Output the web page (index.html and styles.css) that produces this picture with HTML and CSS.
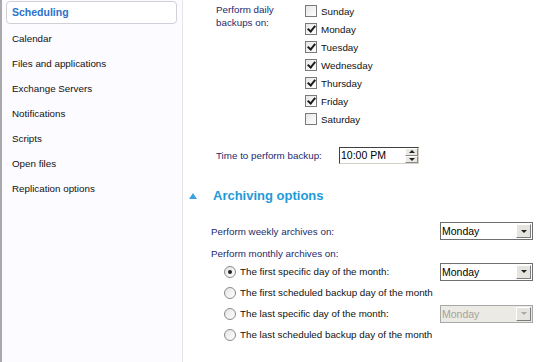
FILE: index.html
```html
<!DOCTYPE html>
<html lang="en">
<head>
    <meta charset="UTF-8">
    <title>Backup options</title>
    <link rel="stylesheet" href="styles.css">
</head>
<body>
    <div class="window">
        <div class="sidebar">
            <div class="nav-item active">Scheduling</div>
            <div class="nav-item">Calendar</div>
            <div class="nav-item">Files and applications</div>
            <div class="nav-item">Exchange Servers</div>
            <div class="nav-item">Notifications</div>
            <div class="nav-item">Scripts</div>
            <div class="nav-item">Open files</div>
            <div class="nav-item">Replication options</div>
        </div>

        <div class="main">
            <div class="daily">
                <div class="label daily-label">Perform daily<br>backups on:</div>
                <div class="days">
                    <div class="day"><span class="check"></span>Sunday</div>
                    <div class="day"><span class="check on"></span>Monday</div>
                    <div class="day"><span class="check on"></span>Tuesday</div>
                    <div class="day"><span class="check on"></span>Wednesday</div>
                    <div class="day"><span class="check on"></span>Thursday</div>
                    <div class="day"><span class="check on"></span>Friday</div>
                    <div class="day"><span class="check"></span>Saturday</div>
                </div>
            </div>

            <div class="time-row">
                <div class="label time-label">Time to perform backup:</div>
                <div class="spin">
                    <span class="spin-value">10:00 PM</span>
                    <span class="spin-buttons">
                        <span class="spin-btn"><span class="arrow up"></span></span>
                        <span class="spin-btn"><span class="arrow down"></span></span>
                    </span>
                </div>
            </div>

            <div class="section-head">
                <span class="tri"></span>
                <span class="section-title">Archiving options</span>
            </div>

            <div class="weekly">
                <div class="label weekly-label">Perform weekly archives on:</div>
                <div class="select"><span class="select-value">Monday</span><span class="select-btn"><span class="arrow down"></span></span></div>
            </div>

            <div class="label monthly-label">Perform monthly archives on:</div>

            <div class="radios">
                <div class="radio-row">
                    <div class="radio-opt"><span class="radio on"></span>The first specific day of the month:</div>
                    <div class="select"><span class="select-value">Monday</span><span class="select-btn"><span class="arrow down"></span></span></div>
                </div>
                <div class="radio-row">
                    <div class="radio-opt"><span class="radio"></span>The first scheduled backup day of the month</div>
                </div>
                <div class="radio-row">
                    <div class="radio-opt"><span class="radio"></span>The last specific day of the month:</div>
                    <div class="select disabled"><span class="select-value">Monday</span><span class="select-btn"><span class="arrow down"></span></span></div>
                </div>
                <div class="radio-row">
                    <div class="radio-opt"><span class="radio"></span>The last scheduled backup day of the month</div>
                </div>
            </div>
        </div>
    </div>
</body>
</html>
```

FILE: styles.css
```css
body {
    margin: 0;
    font-family: "Liberation Sans", Arial, sans-serif;
    font-size: 9.8px;
    color: #111;
    background: #fff;
}
.window {
    display: flex;
    width: 546px;
    height: 362px;
    overflow: hidden;
}

/* left navigation */
.sidebar {
    width: 180px;
    padding: 1px 0 0 0;
    background: #fcfbff;
    border-left: 2px solid #a9a9ab;
    border-right: 1px solid #e4e4ea;
}
.nav-item {
    box-sizing: border-box;
    height: 23px;
    line-height: 21px;
    margin: 0 5px 2px 4px;
    padding-left: 5px;
    border: 1px solid transparent;
    border-radius: 4px;
}
.nav-item.active {
    margin-bottom: 3px;
    background: #fff;
    border-color: #cfd0d8;
    color: #2b72c9;
    font-weight: bold;
    font-size: 10.5px;
}

/* content */
.main {
    flex: 1;
    padding-top: 2px;
}
.label {
    color: #1e2a6c;
}
.daily {
    display: flex;
    padding-left: 33px;
}
.daily-label {
    width: 89px;
    line-height: 13px;
    padding-top: 1px;
}
.day {
    display: flex;
    align-items: center;
    height: 18px;
}
.check {
    position: relative;
    width: 10px;
    height: 10px;
    margin-right: 4px;
    border: 1px solid #7a7a7a;
    background: linear-gradient(135deg, #e6e6e6, #fff);
}
.check.on::after {
    content: "";
    position: absolute;
    left: 3px;
    top: 0px;
    width: 3px;
    height: 6px;
    border: solid #1d1d1d;
    border-width: 0 2px 2px 0;
    transform: rotate(40deg);
}

.time-row {
    display: flex;
    align-items: center;
    margin-top: 19px;
    padding-left: 33px;
}
.time-label {
    width: 123px;
}
.spin {
    display: flex;
    width: 78px;
    height: 15px;
    border: 1px solid;
    border-color: #404040 #d4d0c8 #d4d0c8 #404040;
    background: #fff;
}
.spin-value {
    flex: 1;
    line-height: 15px;
    padding-left: 1px;
    color: #000;
    font-size: 10.5px;
}
.spin-buttons {
    display: flex;
    flex-direction: column;
    width: 13px;
}
.spin-btn {
    flex: 1;
    display: flex;
    align-items: center;
    justify-content: center;
    background: #ece9e4;
    border: 1px solid;
    border-color: #fff #8a8a8a #8a8a8a #fff;
}
.arrow {
    width: 0;
    height: 0;
    border-left: 3px solid transparent;
    border-right: 3px solid transparent;
}
.arrow.up {
    border-bottom: 3px solid #222;
}
.arrow.down {
    border-top: 3px solid #222;
}

.section-head {
    display: flex;
    align-items: center;
    height: 16px;
    margin-top: 23px;
    padding-left: 6px;
}
.tri {
    width: 0;
    height: 0;
    margin-top: 2px;
    margin-right: 16px;
    border-left: 4px solid transparent;
    border-right: 4px solid transparent;
    border-bottom: 6px solid #3aa3e3;
}
.section-title {
    color: #1e9ad8;
    font-weight: bold;
    font-size: 13px;
}

.weekly {
    display: flex;
    align-items: center;
    margin-top: 19px;
    padding-left: 28px;
}
.weekly-label {
    width: 229px;
}
.select {
    display: flex;
    width: 91px;
    height: 16px;
    border: 1px solid #6f6f6f;
    background: #fff;
}
.select-value {
    flex: 1;
    line-height: 16px;
    padding-left: 1px;
    color: #000;
    font-size: 10.5px;
}
.select-btn {
    display: flex;
    align-items: center;
    justify-content: center;
    width: 13px;
    margin: 1px;
    background: #e6e4de;
    border: 1px solid;
    border-color: #fff #7c7c7c #7c7c7c #fff;
}
.select.disabled {
    background: #eceae4;
    border-color: #a8a8a8;
}
.select.disabled .select-value {
    color: #a6a39b;
}
.select.disabled .arrow.down {
    border-top-color: #a8a8a8;
}

.monthly-label {
    margin-top: 7px;
    padding-left: 28px;
    line-height: 13px;
}
.radios {
    margin-top: 1px;
    padding-left: 41px;
}
.radio-row {
    display: flex;
    align-items: center;
    height: 21px;
}
.radio-opt {
    display: flex;
    align-items: center;
    width: 216px;
    white-space: nowrap;
}
.radio {
    position: relative;
    width: 10px;
    height: 10px;
    margin-right: 4px;
    border: 1px solid #8a8a8a;
    border-radius: 50%;
    background: linear-gradient(135deg, #e4e4e4, #fff);
}
.radio.on::after {
    content: "";
    position: absolute;
    left: 3px;
    top: 3px;
    width: 4px;
    height: 4px;
    border-radius: 50%;
    background: #222;
}
```
